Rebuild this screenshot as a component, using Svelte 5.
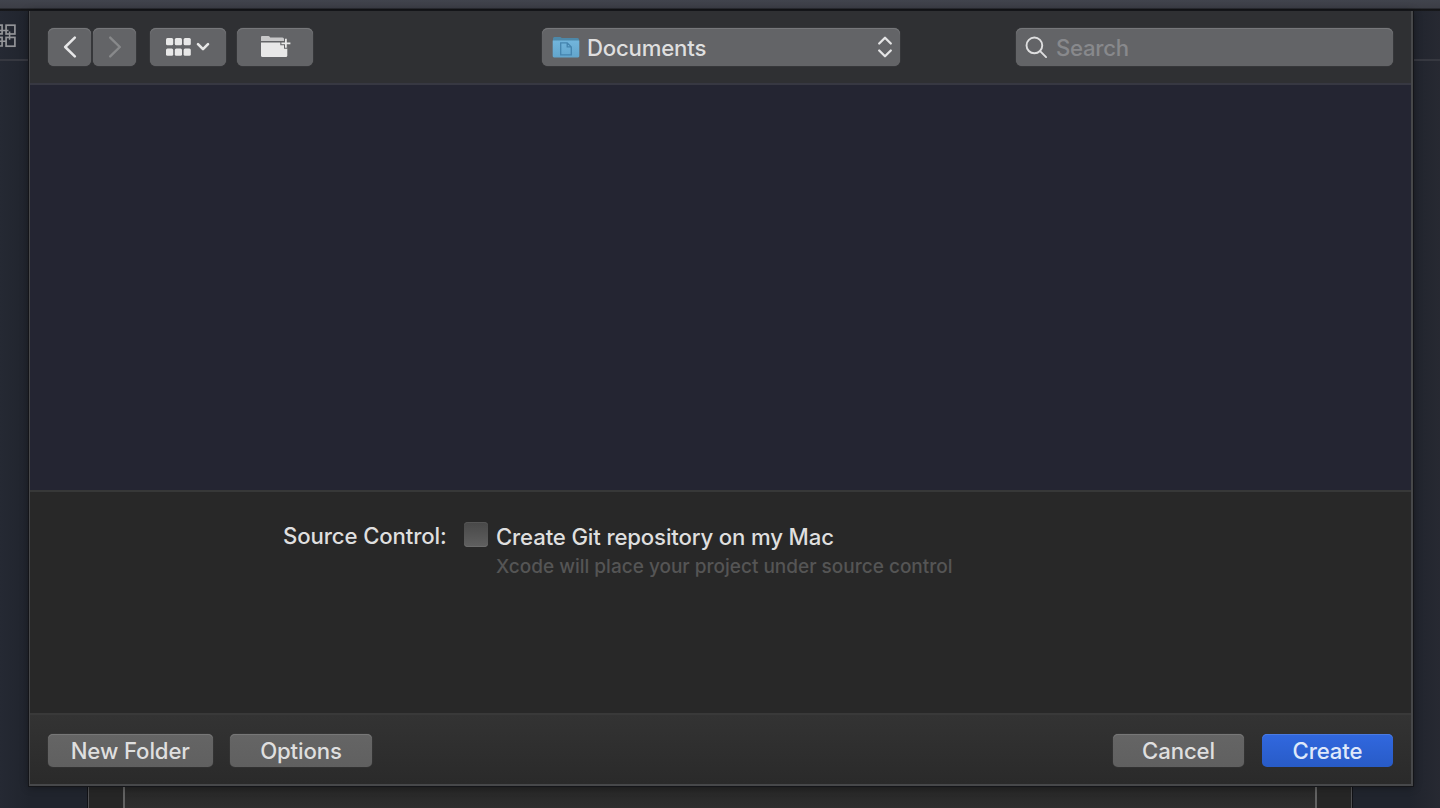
<script>
  const cells = [0, 1, 2, 3, 4, 5];
</script>

<div class="desktop">
  <header class="titlebar"></header>
  <div class="strip">
    <svg class="grid-icon" width="16" height="24" viewBox="0 0 16 24" fill="none" stroke="#939498" stroke-width="1.7">
      <path d="M-3 1.2H2.1V9.8H-3M-3 13.4H2.1V22H-3" />
      <rect x="6.1" y="1.2" width="8.8" height="8.8" />
      <rect x="6.1" y="13.4" width="8.8" height="8.8" />
      <path d="M0 6.5H8.5M0 17.3H6M9.6 7.5V15.8" stroke-width="1.5" />
    </svg>
  </div>
  <div class="workspace"></div>
  <div class="parent-window"><div class="inner"></div></div>

  <section class="sheet">
    <div class="toolbar">
      <button class="ctl nav" aria-label="Back">
        <svg width="14" height="22" viewBox="0 0 14 22"><path d="M11.8 1.6 2.2 11l9.6 9.4" fill="none" stroke="#e7e7e8" stroke-width="2.5" stroke-linecap="round" stroke-linejoin="round" /></svg>
      </button>
      <button class="ctl nav forward" aria-label="Forward">
        <svg width="14" height="22" viewBox="0 0 14 22"><path d="M2.2 1.6 11.8 11l-9.6 9.4" fill="none" stroke="#88898b" stroke-width="2.4" stroke-linecap="round" stroke-linejoin="round" /></svg>
      </button>
      <button class="ctl view" aria-label="View">
        <svg width="46" height="20" viewBox="0 0 46 20">
          {#each cells as c}
            <rect x={1 + (c % 3) * 8.8} y={1 + Math.floor(c / 3) * 10.6} width="7.2" height="7.2" rx="1.5" fill="#e8e8e8" />
          {/each}
          <path d="m33 7.2 5 5 5-5" fill="none" stroke="#e7e7e7" stroke-width="2.6" stroke-linecap="round" stroke-linejoin="round" />
        </svg>
      </button>
      <button class="ctl folder" aria-label="New folder">
        <svg width="31" height="23" viewBox="0 0 31 23">
          <path d="M1 6V2Q1 1 2 1H8.3Q9.2 1 9.7 1.8L10.2 2.5H22.5Q24 2.5 24 4V6Z" fill="#c8c8c9" />
          <path d="M1 7.5H27.3V20.5Q27.3 22 25.8 22H2.5Q1 22 1 20.5Z" fill="#e8e8e8" />
          <path d="M25.9 2.8V13.8M20.3 8.3H31" stroke="#636467" stroke-width="3.8" />
          <path d="M25.9 3.8V12.8M21.4 8.3H30.4" stroke="#e8e8e8" stroke-width="1.8" />
        </svg>
      </button>
      <button class="ctl location">
        <svg width="28" height="22" viewBox="0 0 28 22">
          <defs><linearGradient id="blue" x1="0" y1="0" x2="0" y2="1"><stop stop-color="#72b5dc" /><stop offset="1" stop-color="#62a5cc" /></linearGradient></defs>
          <path d="M1 6V2.5Q1 1 2.5 1H8Q9 1 9.7 2.1H25.5Q27 2.1 27 3.6V6Z" fill="#4d88a9" />
          <path d="M.7 4.6H27.3V20Q27.3 21.4 26 21.4H2Q.7 21.4.7 20Z" fill="url(#blue)" />
          <path d="M8.7 6.8H15.2L19.3 10.9V18.8H8.7ZM15.2 6.8V10.9H19.3" fill="none" stroke="#4484ae" stroke-width="1.3" />
        </svg>
        <span class="label documents">Documents</span>
        <svg class="updown" width="16" height="22" viewBox="0 0 16 22"><path d="m2.2 7.5 5.8-5.7 5.8 5.7M2.2 14.5 8 20.2l5.8-5.7" fill="none" stroke="#e4e4e5" stroke-width="2.3" stroke-linecap="round" stroke-linejoin="round" /></svg>
      </button>
      <div class="ctl search">
        <svg width="23" height="23" viewBox="0 0 24 24" fill="none" stroke="#dededf" stroke-width="2" stroke-linecap="round"><circle cx="9.8" cy="9.8" r="8.2" /><path d="m15.8 15.8 6.2 6.2" /></svg>
        <span class="label placeholder">Search</span>
      </div>
    </div>

    <div class="browser"></div>

    <div class="options">
      <span class="label source">Source Control:</span>
      <span class="checkbox"></span>
      <div class="choice">
        <span class="label git">Create Git repository on my Mac</span>
        <span class="label hint">Xcode will place your project under source control</span>
      </div>
    </div>

    <footer>
      <button class="push new"><span class="label">New Folder</span></button>
      <button class="push opts"><span class="label">Options</span></button>
      <button class="push cancel"><span class="label">Cancel</span></button>
      <button class="push create"><span class="label">Create</span></button>
    </footer>
  </section>
</div>

<style>
  :global(body) { margin: 0; background: #252830; }
  * { box-sizing: border-box; }
  .desktop {
    position: relative;
    display: flex;
    flex-direction: column;
    width: 1440px;
    height: 808px;
    overflow: hidden;
    background: linear-gradient(90deg, #252933 0, #20242d 30px, #20242d 1410px, #272932 1440px);
    font-family: Inter, "Liberation Sans", sans-serif;
    font-size: 22.2px;
    font-weight: 450;
    letter-spacing: -.12px;
    color: #dfdfdf;
  }
  .titlebar { height: 11px; flex: none; background: linear-gradient(#41444d, #3c3e46 8px, #17181b 9px, #101113 10px, #1d1e22 11px); }
  .strip { height: 50px; flex: none; border-bottom: 2px solid #363840; }
  .grid-icon { display: block; margin-top: 13px; }
  .workspace { flex: 1; }
  .parent-window {
    height: 25px;
    margin: 0 88px;
    padding: 0 34px;
    border: solid #515153;
    border-width: 0 1px;
    box-shadow: 0 0 0 1px #111216;
    background: #262626;
  }
  .inner { height: 100%; border: solid #626262; border-width: 0 2px; background: linear-gradient(#252525, #2e2e2e); }
  .sheet {
    position: absolute;
    left: 29px;
    top: 11px;
    width: 1384px;
    height: 775px;
    display: flex;
    flex-direction: column;
    border: solid #505153;
    border-width: 0 2px 2px 1px;
    border-color: #47484a;
    box-shadow: 0 0 0 1px #141519, 0 1px 8px #0006;
    background: #282828;
  }
  .toolbar {
    flex: none;
    height: 74px;
    display: flex;
    align-items: center;
    padding: 0 18px;
    border-bottom: 2px solid #373842;
    background: #2f3033;
  }
  button { font: inherit; letter-spacing: inherit; color: inherit; border: 0; padding: 0; }
  .ctl {
    display: flex;
    align-items: center;
    justify-content: center;
    flex: none;
    height: 38px;
    border-radius: 6px;
    background: #636467;
    box-shadow: inset 0 1px #77787b, 0 0 1px #777;
  }
  .nav { width: 43px; }
  .forward { margin-left: 2px; }
  .view { width: 76px; margin-left: 14px; }
  .folder { width: 76px; margin-left: 11px; }
  .folder svg { transform: translateY(-1px); }
  .location { width: 358px; margin-left: 229px; padding: 0 7px 0 10px; }
  .location .label { margin-left: 7px; }
  .updown { margin-left: auto; }
  .search { width: 377px; margin-left: auto; padding-left: 9px; justify-content: flex-start; }
  .search .label { margin-left: 8px; letter-spacing: -.3px; }
  .placeholder { color: #88898c; }
  .label { display: block; white-space: nowrap; line-height: 28px; padding-top: 1px; }
  .browser { flex: none; height: 405px; background: #242532; }
  .options {
    flex: none;
    height: 223px;
    display: flex;
    align-items: flex-start;
    padding: 30px 0 0 253px;
    border-top: 2px solid #373838;
    background: #282828;
  }
  .source { width: 164px; padding-top: 0; }
  .checkbox {
    flex: none;
    width: 24px;
    height: 25px;
    margin-left: 17px;
    border-radius: 4px;
    background: linear-gradient(#484848, #606060);
    box-shadow: inset 0 1px #565656, inset 0 -1px #6c6c6c;
  }
  .choice { margin-left: 8px; }
  .git { letter-spacing: -.16px; }
  .hint { font-size: 19px; color: #555; line-height: 31px; padding-top: 0; letter-spacing: 0; }
  footer {
    flex: 1;
    display: flex;
    align-items: flex-start;
    padding: 19px 18px 0;
    border-top: 2px solid #393939;
    background: linear-gradient(#333, #2a2a2a);
  }
  .push {
    display: flex;
    align-items: center;
    justify-content: center;
    height: 33px;
    border-radius: 5px;
    background: linear-gradient(#656565, #606060);
    box-shadow: inset 0 1px #777, 0 0 1px #666;
  }
  .new { width: 164.5px; }
  .opts { width: 142px; margin-left: 17.5px; }
  .cancel { width: 131px; margin-left: auto; }
  .create { width: 131px; margin-left: 18px; color: #dfe8fa; background: linear-gradient(#3168df, #285bc7); box-shadow: inset 0 1px #4a7be3; }
  .documents { letter-spacing: -.2px; }
</style>
